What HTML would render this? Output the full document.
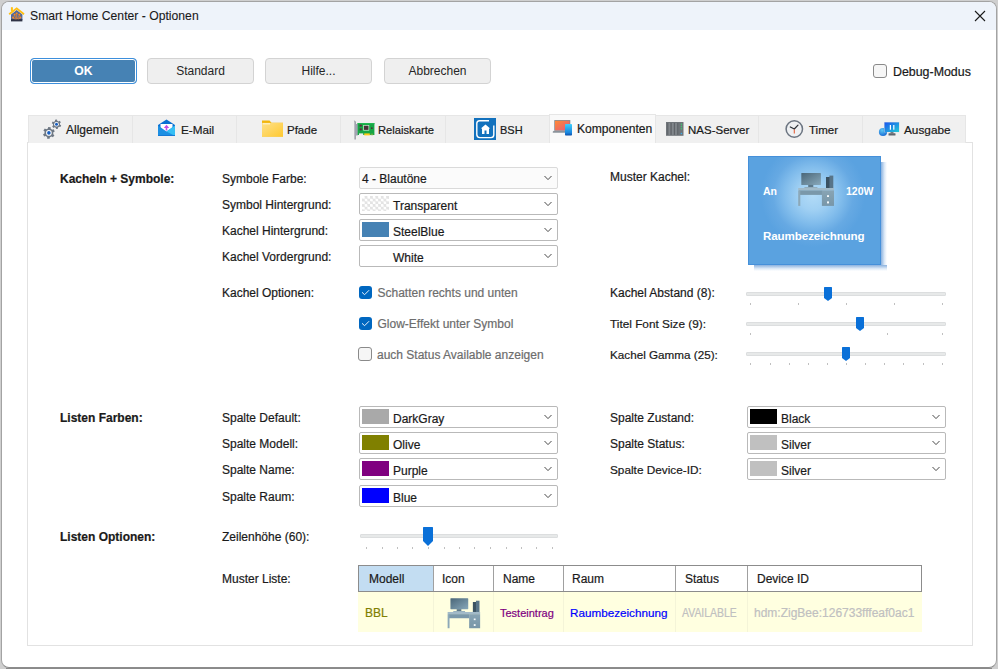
<!DOCTYPE html>
<html><head><meta charset="utf-8">
<style>
*{box-sizing:border-box;margin:0;padding:0}
html,body{-webkit-text-stroke:0.2px currentColor;width:998px;height:669px;overflow:hidden;background:#cfcfcf;font-family:"Liberation Sans",sans-serif;font-size:12px;color:#1a1a1a}
.win{position:absolute;left:1px;top:1px;width:996px;height:667px;border:1px solid #a3a3a3;border-bottom-color:#8c8c8c;border-radius:8px;background:#fff;overflow:hidden}
.title{position:absolute;left:0;top:0;width:100%;height:28px;background:#eef3fa}
.a{position:absolute;white-space:nowrap;line-height:14px}
.i{position:absolute;overflow:visible}
.btn{-webkit-text-stroke:0;position:absolute;top:58px;height:26px;width:107px;border:1px solid #d3d3d3;border-radius:4px;background:#efefef;text-align:center;line-height:25px;font-size:12px;color:#262626}
.ok{border:1px solid #3d8fdc;background:#4682b4;box-shadow:inset 0 0 0 1px #fff;color:#fff;font-weight:bold;font-size:12.2px;line-height:25px}
.tab{position:absolute;top:115px;height:28px;background:#f0f0f0;border:1px solid #e6e6e6;border-bottom:none}
.tab.sel{top:114px;background:#f9f9f9;height:29px}
.panel{position:absolute;left:27px;top:142px;width:946px;height:504px;border:1px solid #e2e2e2;background:#fff}
.b{font-weight:bold}
.combo{position:absolute;height:22px;width:199px;border:1px solid #b9b9b9;border-radius:2px;background:#fff}
.combo .sw{position:absolute;left:2px;top:2px;width:27px;height:15px}
.combo .tx{position:absolute;left:33px;top:5px;line-height:14px;white-space:nowrap}
.combo svg.chev{position:absolute;right:5px;top:7px;width:8px;height:6px}
.chk{position:absolute;width:13px;height:13px;border-radius:3px}
.chk.on{background:#0067c0}
.chk.off{border:1px solid #8a8a8a;background:#f6f6f6}
.grey{color:#6d6d6d}
.track{position:absolute;height:5px;background:#e7e9e9;border:1px solid #dcdedf;border-radius:1px}
.tick{position:absolute;width:1px;height:2px;background:#c0c0c0}
</style></head><body>
<div style="position:absolute;left:6px;top:668px;width:986px;height:1px;background:#8a8a8a"></div>
<div class="win"><div class="title"></div></div>
<svg class="i" style="left:8px;top:6px;" width="18" height="18" viewBox="0 0 18 18">
 <path d="M3 14 V8.6 L8.7 4 L14.4 8.6 V14 Z" fill="#53699a"/>
 <path d="M0.6 7.6 L8.7 1.2 L16.6 7.6 L15.4 8.9 L8.7 3.6 L1.8 8.9 Z" fill="#ffbf12"/>
 <rect x="2.9" y="1.2" width="2" height="4.2" fill="#ffbf12"/>
 <rect x="3" y="13.2" width="11.4" height="2.2" fill="#2f3346"/>
 <g fill="#ff8a1a"><circle cx="6.6" cy="8.8" r="1"/><circle cx="8.7" cy="7.6" r="1"/><circle cx="11.3" cy="8.8" r="1"/><circle cx="5.1" cy="11.4" r="1"/><circle cx="12.3" cy="11.4" r="1"/></g>
 <path d="M8.7 8.6 V13.2 M6.6 9.8 Q7.8 11.8 8.2 13.2 M11.3 9.8 Q9.8 11.8 9.3 13.2 M5.1 12.3 Q6.8 12.6 7.4 13.2 M12.3 12.3 Q10.6 12.6 10 13.2" stroke="#f08428" stroke-width="0.8" fill="none"/>
</svg>
<div class="a" style="left:30px;top:9px;color:#1a1a1a;font-size:12.2px;-webkit-text-stroke:0.1px #1a1a1a">Smart Home Center - Optionen</div>
<svg class="i" style="left:974px;top:10px;" width="12" height="12" viewBox="0 0 12 12"><path d="M1 1 L11 11 M11 1 L1 11" stroke="#1a1a1a" stroke-width="1.1"/></svg>
<div class="btn ok" style="left:30px">OK</div>
<div class="btn" style="left:147px">Standard</div>
<div class="btn" style="left:265px">Hilfe...</div>
<div class="btn" style="left:384px">Abbrechen</div>
<div class="chk off" style="left:873px;top:64px;width:14px;height:14px"></div>
<div class="a" style="left:893px;top:65px;font-size:12.4px">Debug-Modus</div>
<div class="panel"></div>
<div class="tab" style="left:28px;width:105px"></div>
<div class="a" style="left:66px;top:123px;font-size:12px">Allgemein</div>
<div class="tab" style="left:132px;width:105px"></div>
<div class="a" style="left:181px;top:123px;font-size:11.7px">E-Mail</div>
<div class="tab" style="left:236px;width:105px"></div>
<div class="a" style="left:287px;top:123px;font-size:11.5px">Pfade</div>
<div class="tab" style="left:340px;width:106px"></div>
<div class="a" style="left:378px;top:123px;font-size:11.2px">Relaiskarte</div>
<div class="tab" style="left:445px;width:105px"></div>
<div class="a" style="left:500px;top:123px;font-size:11px">BSH</div>
<div class="tab sel" style="left:549px;width:107px"></div>
<div class="a" style="left:577px;top:122px;font-size:12.1px">Komponenten</div>
<div class="tab" style="left:655px;width:104px"></div>
<div class="a" style="left:688px;top:123px;font-size:11.5px">NAS-Server</div>
<div class="tab" style="left:758px;width:105px"></div>
<div class="a" style="left:809px;top:123px;font-size:11.5px">Timer</div>
<div class="tab" style="left:862px;width:104px"></div>
<div class="a" style="left:904px;top:123px;font-size:11.8px">Ausgabe</div>
<svg class="i" style="left:40px;top:115px;" width="24" height="26" viewBox="0 0 24 26">
 <path d="M13.20 19.23 L14.42 20.26 L12.98 22.30 L11.60 21.50 L9.90 22.29 L9.61 23.86 L7.13 23.63 L7.13 22.04 L5.60 20.96 L4.10 21.50 L3.05 19.23 L4.43 18.43 L4.60 16.57 L3.38 15.54 L4.82 13.50 L6.20 14.30 L7.90 13.51 L8.19 11.94 L10.67 12.17 L10.67 13.76 L12.20 14.84 L13.70 14.30 L14.75 16.57 L13.37 17.37Z" fill="#6e7884"/>
 <circle cx="8.9" cy="17.9" r="2.8" fill="#fff"/><circle cx="8.9" cy="17.9" r="1.8" fill="#1a5fbf"/>
 <path d="M20.08 9.66 L21.20 10.28 L20.40 12.10 L19.19 11.70 L17.98 12.58 L18.00 13.86 L16.02 14.08 L15.77 12.82 L14.40 12.22 L13.31 12.88 L12.12 11.27 L13.08 10.43 L12.92 8.94 L11.80 8.32 L12.60 6.50 L13.81 6.90 L15.02 6.02 L15.00 4.74 L16.98 4.52 L17.23 5.78 L18.60 6.38 L19.69 5.72 L20.88 7.33 L19.92 8.17Z" fill="#6e7884"/>
 <circle cx="16.5" cy="9.3" r="2.3" fill="#fff"/><circle cx="16.5" cy="9.3" r="1.5" fill="#1a5fbf"/>
</svg>
<svg class="i" style="left:157px;top:118px;" width="19" height="20" viewBox="0 0 19 20">
 <path d="M1 7 L9.5 1.6 L18 7 V12 H1 Z" fill="#0a6fd2"/>
 <rect x="3.5" y="6" width="12" height="7" fill="#fff"/>
 <path d="M9.5 12.5 V9.5" stroke="#c24ee6" stroke-width="1.6"/>
 <path d="M6.8 10 L9.5 6.8 L12.2 10 Z" fill="#c24ee6"/>
 <path d="M1 7.5 L9.5 13.5 L18 7.5 V18 H1 Z" fill="#1c8fe3"/>
 <path d="M9.5 13.5 L18 7.5 V18 Z" fill="#36bff4"/>
 <rect x="1" y="17" width="17" height="1" fill="#1479d6"/>
</svg>
<svg class="i" style="left:261px;top:119px;" width="23" height="19" viewBox="0 0 23 19">
 <defs><linearGradient id="fg" x1="0" y1="0" x2="1" y2="1"><stop offset="0" stop-color="#fde08a"/><stop offset="1" stop-color="#ffc930"/></linearGradient></defs>
 <path d="M1 1.6 H8.5 L10.5 3.8 H22 V17.6 H1 Z" fill="#f2b60e"/>
 <path d="M1 3.9 H8.8 L10.2 3.9 H22 V17.7 H1 Z" fill="url(#fg)"/>
 <rect x="2" y="4.2" width="7" height="1.2" fill="#fff3c8"/>
</svg>
<svg class="i" style="left:353px;top:119px;" width="22" height="22" viewBox="0 0 22 22">
 <path d="M0.8 1.2 L2.6 2.4 V20.6 H1.6 V2.6 Z" fill="#6e7380"/>
 <rect x="2.6" y="5" width="2.2" height="11.5" fill="#a3a0b4"/>
 <rect x="4.6" y="4" width="16.8" height="12" fill="#16a645"/>
 <path d="M4.6 4 H21.4 V5.2 H4.6 Z" fill="#20b850"/>
 <rect x="6.6" y="5.6" width="2.2" height="2" fill="#5e2f3c"/><rect x="6.6" y="9.4" width="2.2" height="2" fill="#5e2f3c"/>
 <rect x="10.2" y="6" width="6" height="5.6" fill="#c8f0d0"/>
 <rect x="10.9" y="6.7" width="4.6" height="4.2" fill="#4a3038"/>
 <rect x="18" y="8.4" width="1.6" height="1.6" fill="#4a3038"/>
 <rect x="6" y="14.4" width="4.2" height="2.2" fill="#f0f0f0"/>
 <rect x="11.2" y="14.4" width="5.6" height="2" fill="#ffcc16"/>
 <rect x="17.6" y="14.6" width="2.5" height="1.6" fill="#6ab040"/>
</svg>
<svg class="i" style="left:474px;top:118px;" width="22" height="22" viewBox="0 0 22 22">
 <rect x="0" y="0" width="22" height="22" fill="#1271bd"/>
 <path d="M15 2.8 H5.5 Q2.8 2.8 2.8 5.5 V16.6 Q2.8 19.6 5.8 19.6 H17 Q19.8 19.6 19.8 16.8 V7.5" stroke="#fff" stroke-width="1.4" fill="none"/>
 <path d="M6.8 10.5 L11.5 6.6 L16.2 10.5 H15 V16 H8 V10.5 Z" fill="#fff"/>
 <rect x="10.5" y="12.5" width="2" height="3.5" fill="#1271bd"/>
</svg>
<svg class="i" style="left:552px;top:119px;" width="22" height="18" viewBox="0 0 22 18">
 <defs><linearGradient id="kg1" x1="0" y1="0" x2="1" y2="1"><stop offset="0" stop-color="#ff8a35"/><stop offset="1" stop-color="#e4587e"/></linearGradient>
 <linearGradient id="kg2" x1="0" y1="0" x2="0" y2="1"><stop offset="0" stop-color="#3fd0fb"/><stop offset="0.75" stop-color="#1a86df"/><stop offset="1" stop-color="#0c4ea8"/></linearGradient></defs>
 <rect x="2.3" y="1.1" width="16" height="10.4" fill="#7c828a"/>
 <rect x="3" y="1.8" width="14.6" height="9.7" fill="url(#kg1)"/>
 <path d="M0.8 12.6 L2.3 11.4 H14 V13.8 H0.8 Z" fill="#8b939b"/>
 <rect x="13" y="4.9" width="7" height="11.6" rx="0.8" fill="url(#kg2)"/>
</svg>
<svg class="i" style="left:665px;top:121px;" width="20" height="16" viewBox="0 0 20 16">
 <rect x="1" y="1" width="17.5" height="13.8" fill="#6f7479"/>
 <g fill="#5c6065"><rect x="2.4" y="2" width="0.8" height="11.8"/><rect x="5.6" y="2" width="0.8" height="11.8"/><rect x="9" y="2" width="0.8" height="11.8"/><rect x="12.4" y="2" width="0.8" height="11.8"/></g>
 <g fill="#82878c"><rect x="3.6" y="2" width="1.6" height="11.8"/><rect x="7" y="2" width="1.6" height="11.8"/><rect x="10.2" y="2" width="1.6" height="11.8"/></g>
 <g fill="#3fca6e"><circle cx="16.4" cy="3.2" r="0.8"/><circle cx="16.4" cy="5.5" r="0.8"/><circle cx="16.4" cy="7.7" r="0.8"/></g>
 <circle cx="16.4" cy="12.5" r="0.8" fill="#36b0f0"/>
</svg>
<svg class="i" style="left:784px;top:119px;" width="21" height="21" viewBox="0 0 21 21">
 <circle cx="10.3" cy="10" r="8.2" fill="#eef0f2" stroke="#6b7480" stroke-width="1.5"/>
 <path d="M10.3 10 L6.3 8 M10.3 10 L14 6.2" stroke="#2a2f35" stroke-width="1.2" stroke-linecap="round"/>
 <path d="M10.3 10.5 V14.5" stroke="#e6603a" stroke-width="1.1"/>
</svg>
<svg class="i" style="left:878px;top:120px;" width="23" height="18" viewBox="0 0 23 18">
 <defs><linearGradient id="ag" x1="0" y1="0" x2="1" y2="1"><stop offset="0" stop-color="#1a55f0"/><stop offset="1" stop-color="#22cbd6"/></linearGradient>
 <radialGradient id="ag2" cx="0.4" cy="0.3" r="0.8"><stop offset="0" stop-color="#5cc8f5"/><stop offset="1" stop-color="#1060d0"/></radialGradient></defs>
 <circle cx="5" cy="12" r="4.1" fill="url(#ag2)"/>
 <rect x="6" y="2" width="15.4" height="10.2" fill="#cfd6dc"/>
 <rect x="6.5" y="2.4" width="14.5" height="9.6" fill="url(#ag)"/>
 <rect x="11.8" y="5" width="1.2" height="4.7" fill="#fff"/><rect x="15.2" y="5" width="1.2" height="4.7" fill="#fff"/>
 <rect x="12.5" y="12.2" width="3" height="1.2" fill="#5a6068"/>
 <rect x="10.5" y="13.3" width="7" height="2.2" rx="0.5" fill="#5f666e"/>
</svg>
<div class="a b" style="left:60px;top:172px">Kacheln + Symbole:</div>
<div class="a b" style="left:60px;top:411px">Listen Farben:</div>
<div class="a b" style="left:60px;top:530px">Listen Optionen:</div>
<div class="a" style="left:222px;top:172px">Symbole Farbe:</div>
<div class="a" style="left:222px;top:198px">Symbol Hintergrund:</div>
<div class="a" style="left:222px;top:224px">Kachel Hintergrund:</div>
<div class="a" style="left:222px;top:250px">Kachel Vordergrund:</div>
<div class="a" style="left:222px;top:286px">Kachel Optionen:</div>
<div class="a" style="left:222px;top:411px">Spalte Default:</div>
<div class="a" style="left:222px;top:437px">Spalte Modell:</div>
<div class="a" style="left:222px;top:463px">Spalte Name:</div>
<div class="a" style="left:222px;top:490px">Spalte Raum:</div>
<div class="a" style="left:222px;top:530px">Zeilenhöhe (60):</div>
<div class="a" style="left:222px;top:572px">Muster Liste:</div>
<div class="combo" style="left:359px;top:167px;background:#fbfbfb;border-color:#dadada"><span class="tx" style="top:4px;left:2px">4 - Blautöne</span><svg class="chev" viewBox="0 0 8 6"><path d="M0.5 1 L4 4.6 L7.5 1" stroke="#4a4a4a" stroke-width="1" fill="none"/></svg></div>
<div class="combo" style="left:359px;top:193px;"><div class="sw" style="background-color:#fff;background-image:linear-gradient(45deg,#e3e3e3 25%,transparent 25%,transparent 75%,#e3e3e3 75%),linear-gradient(45deg,#e3e3e3 25%,transparent 25%,transparent 75%,#e3e3e3 75%);background-size:5.4px 5.4px;background-position:0 0,2.7px 2.7px"></div><span class="tx" style="left:33px">Transparent</span><svg class="chev" viewBox="0 0 8 6"><path d="M0.5 1 L4 4.6 L7.5 1" stroke="#4a4a4a" stroke-width="1" fill="none"/></svg></div>
<div class="combo" style="left:359px;top:219px;"><div class="sw" style="background:#4682b4"></div><span class="tx" style="left:33px">SteelBlue</span><svg class="chev" viewBox="0 0 8 6"><path d="M0.5 1 L4 4.6 L7.5 1" stroke="#4a4a4a" stroke-width="1" fill="none"/></svg></div>
<div class="combo" style="left:359px;top:245px;"><span class="tx" style="left:33px">White</span><svg class="chev" viewBox="0 0 8 6"><path d="M0.5 1 L4 4.6 L7.5 1" stroke="#4a4a4a" stroke-width="1" fill="none"/></svg></div>
<div class="combo" style="left:359px;top:406px;"><div class="sw" style="background:#a9a9a9"></div><span class="tx" style="left:33px">DarkGray</span><svg class="chev" viewBox="0 0 8 6"><path d="M0.5 1 L4 4.6 L7.5 1" stroke="#4a4a4a" stroke-width="1" fill="none"/></svg></div>
<div class="combo" style="left:359px;top:432px;"><div class="sw" style="background:#808000"></div><span class="tx" style="left:33px">Olive</span><svg class="chev" viewBox="0 0 8 6"><path d="M0.5 1 L4 4.6 L7.5 1" stroke="#4a4a4a" stroke-width="1" fill="none"/></svg></div>
<div class="combo" style="left:359px;top:458px;"><div class="sw" style="background:#800080"></div><span class="tx" style="left:33px">Purple</span><svg class="chev" viewBox="0 0 8 6"><path d="M0.5 1 L4 4.6 L7.5 1" stroke="#4a4a4a" stroke-width="1" fill="none"/></svg></div>
<div class="combo" style="left:359px;top:485px;"><div class="sw" style="background:#0000ff"></div><span class="tx" style="left:33px">Blue</span><svg class="chev" viewBox="0 0 8 6"><path d="M0.5 1 L4 4.6 L7.5 1" stroke="#4a4a4a" stroke-width="1" fill="none"/></svg></div>
<div class="chk on" style="left:359px;top:286px"><svg width="13" height="13" viewBox="0 0 13 13" style="position:absolute;left:0;top:0"><path d="M3 6.3 L5.6 8.7 L10.1 4.2" stroke="#e8f2fc" stroke-width="1" fill="none"/></svg></div><div class="a grey" style="left:377.5px;top:286px">Schatten rechts und unten</div>
<div class="chk on" style="left:359px;top:317px"><svg width="13" height="13" viewBox="0 0 13 13" style="position:absolute;left:0;top:0"><path d="M3 6.3 L5.6 8.7 L10.1 4.2" stroke="#e8f2fc" stroke-width="1" fill="none"/></svg></div><div class="a grey" style="left:377.5px;top:317px">Glow-Effekt unter Symbol</div>
<div class="chk off" style="left:358px;top:347px;width:14px;height:14px"></div><div class="a grey" style="left:377px;top:348px">auch Status Available anzeigen</div>
<div class="a" style="left:610px;top:170px">Muster Kachel:</div>
<div class="a" style="left:610px;top:286px;">Kachel Abstand (8):</div>
<div class="a" style="left:610px;top:317px;font-size:11.8px">Titel Font Size (9):</div>
<div class="a" style="left:610px;top:348px;font-size:11.7px">Kachel Gamma (25):</div>
<div class="a" style="left:610px;top:411px;">Spalte Zustand:</div>
<div class="a" style="left:610px;top:437px;">Spalte Status:</div>
<div class="a" style="left:610px;top:463px;font-size:11.8px">Spalte Device-ID:</div>
<div class="combo" style="left:747px;top:406px;"><div class="sw" style="background:#000"></div><span class="tx" style="left:33px">Black</span><svg class="chev" viewBox="0 0 8 6"><path d="M0.5 1 L4 4.6 L7.5 1" stroke="#4a4a4a" stroke-width="1" fill="none"/></svg></div>
<div class="combo" style="left:747px;top:432px;"><div class="sw" style="background:#c0c0c0"></div><span class="tx" style="left:33px">Silver</span><svg class="chev" viewBox="0 0 8 6"><path d="M0.5 1 L4 4.6 L7.5 1" stroke="#4a4a4a" stroke-width="1" fill="none"/></svg></div>
<div class="combo" style="left:747px;top:458px;"><div class="sw" style="background:#c0c0c0"></div><span class="tx" style="left:33px">Silver</span><svg class="chev" viewBox="0 0 8 6"><path d="M0.5 1 L4 4.6 L7.5 1" stroke="#4a4a4a" stroke-width="1" fill="none"/></svg></div>
<div class="track" style="left:746px;top:292px;width:200px;height:4px"></div>
<svg class="i" style="left:824px;top:287px" width="8" height="14" viewBox="0 0 8 14"><path d="M0 0.5 Q0 0 0.5 0 H7.5 Q8 0 8 0.5 V11 L4.0 14 L0 11 Z" fill="#0a70d8"/></svg>
<div class="tick" style="left:750px;top:303px"></div><div class="tick" style="left:798px;top:303px"></div><div class="tick" style="left:846px;top:303px"></div><div class="tick" style="left:894px;top:303px"></div><div class="tick" style="left:942px;top:303px"></div>
<div class="track" style="left:746px;top:322px;width:200px;height:4px"></div>
<svg class="i" style="left:856px;top:317px" width="8" height="14" viewBox="0 0 8 14"><path d="M0 0.5 Q0 0 0.5 0 H7.5 Q8 0 8 0.5 V11 L4.0 14 L0 11 Z" fill="#0a70d8"/></svg>
<div class="tick" style="left:750px;top:333px"></div><div class="tick" style="left:887px;top:333px"></div><div class="tick" style="left:942px;top:333px"></div>
<div class="track" style="left:746px;top:352px;width:200px;height:4px"></div>
<svg class="i" style="left:842px;top:347px" width="8" height="14" viewBox="0 0 8 14"><path d="M0 0.5 Q0 0 0.5 0 H7.5 Q8 0 8 0.5 V11 L4.0 14 L0 11 Z" fill="#0a70d8"/></svg>
<div class="tick" style="left:750px;top:363px"></div><div class="tick" style="left:770px;top:363px"></div><div class="tick" style="left:789px;top:363px"></div><div class="tick" style="left:808px;top:363px"></div><div class="tick" style="left:827px;top:363px"></div><div class="tick" style="left:846px;top:363px"></div><div class="tick" style="left:865px;top:363px"></div><div class="tick" style="left:884px;top:363px"></div><div class="tick" style="left:903px;top:363px"></div><div class="tick" style="left:923px;top:363px"></div><div class="tick" style="left:942px;top:363px"></div>
<div class="track" style="left:360px;top:534px;width:198px;height:4px"></div>
<svg class="i" style="left:423px;top:527px" width="10" height="19" viewBox="0 0 10 19"><path d="M0 0.5 Q0 0 0.5 0 H9.5 Q10 0 10 0.5 V14 L5.0 19 L0 14 Z" fill="#0a70d8"/></svg>
<div class="tick" style="left:366px;top:547px"></div><div class="tick" style="left:382px;top:547px"></div><div class="tick" style="left:397px;top:547px"></div><div class="tick" style="left:412px;top:547px"></div><div class="tick" style="left:428px;top:547px"></div><div class="tick" style="left:444px;top:547px"></div><div class="tick" style="left:459px;top:547px"></div><div class="tick" style="left:474px;top:547px"></div><div class="tick" style="left:490px;top:547px"></div><div class="tick" style="left:506px;top:547px"></div><div class="tick" style="left:521px;top:547px"></div><div class="tick" style="left:536px;top:547px"></div><div class="tick" style="left:552px;top:547px"></div>

<div style="position:absolute;left:881px;top:162px;width:6px;height:103px;background:linear-gradient(to right,rgba(60,125,200,0.6),rgba(120,170,225,0.25) 60%,rgba(255,255,255,0))"></div>
<div style="position:absolute;left:754px;top:265px;width:133px;height:6px;background:linear-gradient(to bottom,rgba(60,125,200,0.6),rgba(120,170,225,0.25) 60%,rgba(255,255,255,0))"></div>
<div style="position:absolute;left:748px;top:156px;width:133px;height:109px;border:1px solid #4590da;background:radial-gradient(circle at 64px 38px,#b2dbf7 0,#a0d0f3 15px,#82bdec 28px,#66a9e3 40px,#5aa2e0 52px)"></div>
<svg class="i" style="left:792px;top:166px" width="48.00" height="46.00" viewBox="0 0 48 46">
<defs><linearGradient id="dk1a" x1="0" y1="0" x2="1" y2="1"><stop offset="0" stop-color="#4a6678"/><stop offset="1" stop-color="#88a8ba"/></linearGradient>
<linearGradient id="dk1c" x1="0" y1="0" x2="0" y2="1"><stop offset="0" stop-color="#88a4b4"/><stop offset="1" stop-color="#7896a8"/></linearGradient></defs>
<rect x="9.3" y="6.9" width="19.6" height="12" rx="0.5" fill="url(#dk1a)"/>
<rect x="16.2" y="18.9" width="5.1" height="2.2" fill="#5c788a"/>
<rect x="12.4" y="21" width="13" height="1.1" fill="#92acbb"/>
<rect x="34" y="11" width="4" height="11" fill="#3b5262"/>
<rect x="37.4" y="9.6" width="3.9" height="12.4" fill="#587488"/>
<rect x="6.2" y="22" width="35.8" height="2.4" fill="#a2bac8"/>
<rect x="7.2" y="24.4" width="23" height="4.5" fill="#7a98aa"/>
<rect x="6.2" y="24.4" width="2.1" height="15.5" fill="#8ca8b8"/>
<rect x="29.9" y="24.4" width="12.1" height="15.5" fill="url(#dk1c)"/>
<rect x="35" y="29.2" width="2" height="1.8" fill="#f4f8fa"/><rect x="35" y="35.4" width="2" height="2" fill="#f4f8fa"/>
</svg>
<div class="a b" style="left:763px;top:184px;color:#fff;font-size:10.5px;-webkit-text-stroke:0">An</div>
<div class="a b" style="left:846px;top:184px;color:#fff;font-size:10.5px;-webkit-text-stroke:0">120W</div>
<div class="a b" style="left:763px;top:229px;color:#fff;font-size:11.6px;letter-spacing:-0.1px;-webkit-text-stroke:0">Raumbezeichnung</div>
<div style="position:absolute;left:358px;top:565px;width:564px;height:67px;background:#ffffe0"></div>
<div style="position:absolute;left:358px;top:565px;width:564px;height:27px;border:1px solid #8c8c8c;background:#fff"></div>
<div style="position:absolute;left:359px;top:566px;width:75px;height:25px;background:#c3ddf2"></div>
<div style="position:absolute;left:433px;top:566px;width:1px;height:25px;background:#a0a0a0"></div><div style="position:absolute;left:433px;top:592px;width:1px;height:40px;background:#f4f4d8"></div><div style="position:absolute;left:493px;top:566px;width:1px;height:25px;background:#a0a0a0"></div><div style="position:absolute;left:493px;top:592px;width:1px;height:40px;background:#f4f4d8"></div><div style="position:absolute;left:563px;top:566px;width:1px;height:25px;background:#a0a0a0"></div><div style="position:absolute;left:563px;top:592px;width:1px;height:40px;background:#f4f4d8"></div><div style="position:absolute;left:675px;top:566px;width:1px;height:25px;background:#a0a0a0"></div><div style="position:absolute;left:675px;top:592px;width:1px;height:40px;background:#f4f4d8"></div><div style="position:absolute;left:747px;top:566px;width:1px;height:25px;background:#a0a0a0"></div><div style="position:absolute;left:747px;top:592px;width:1px;height:40px;background:#f4f4d8"></div><div class="a" style="left:369px;top:572px">Modell</div><div class="a" style="left:442px;top:572px">Icon</div><div class="a" style="left:503px;top:572px">Name</div><div class="a" style="left:572px;top:572px">Raum</div><div class="a" style="left:685px;top:572px">Status</div><div class="a" style="left:757px;top:572px">Device ID</div>
<div class="a" style="left:365px;top:606px;color:#808000">BBL</div>
<svg class="i" style="left:441.6px;top:591.7px" width="43.58" height="41.77" viewBox="0 0 48 46">
<defs><linearGradient id="dk2a" x1="0" y1="0" x2="1" y2="1"><stop offset="0" stop-color="#4a6678"/><stop offset="1" stop-color="#88a8ba"/></linearGradient>
<linearGradient id="dk2c" x1="0" y1="0" x2="0" y2="1"><stop offset="0" stop-color="#88a4b4"/><stop offset="1" stop-color="#7896a8"/></linearGradient></defs>
<rect x="9.3" y="6.9" width="19.6" height="12" rx="0.5" fill="url(#dk2a)"/>
<rect x="16.2" y="18.9" width="5.1" height="2.2" fill="#5c788a"/>
<rect x="12.4" y="21" width="13" height="1.1" fill="#92acbb"/>
<rect x="34" y="11" width="4" height="11" fill="#3b5262"/>
<rect x="37.4" y="9.6" width="3.9" height="12.4" fill="#587488"/>
<rect x="6.2" y="22" width="35.8" height="2.4" fill="#a2bac8"/>
<rect x="7.2" y="24.4" width="23" height="4.5" fill="#7a98aa"/>
<rect x="6.2" y="24.4" width="2.1" height="15.5" fill="#8ca8b8"/>
<rect x="29.9" y="24.4" width="12.1" height="15.5" fill="url(#dk2c)"/>
<rect x="35" y="29.2" width="2" height="1.8" fill="#f4f8fa"/><rect x="35" y="35.4" width="2" height="2" fill="#f4f8fa"/>
</svg>
<div class="a" style="left:500px;top:606px;color:#800080;font-size:11px">Testeintrag</div>
<div class="a" style="left:570px;top:606px;color:#0000ff;font-size:11.7px">Raumbezeichnung</div>
<div class="a" style="left:682px;top:606px;color:#c0c0c0;transform:scaleX(0.87);transform-origin:0 0">AVAILABLE</div>
<div class="a" style="left:754px;top:606px;color:#c0c0c0">hdm:ZigBee:126733fffeaf0ac1</div>
</body></html>
